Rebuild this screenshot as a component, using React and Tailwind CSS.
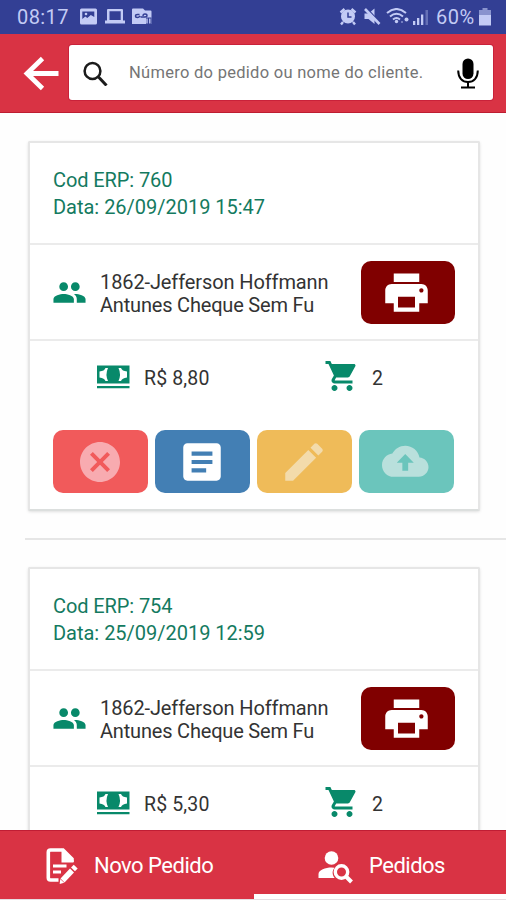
import React from 'react';

function StatusBar() {
  return (
    <div className="flex h-[34px] shrink-0 items-center bg-[#333f94] text-[#c3cbf5]">
      <span className="ml-[17px] w-[53px] text-[20px] leading-none whitespace-nowrap tracking-[0.4px]">08:17</span>
      <svg className="ml-[9px]" width="74" height="18" viewBox="79 9 74 18" fill="currentColor">
        <path fillRule="evenodd" d="M81.500 9.500h14q1.500 0 1.500 1.500v13q0 1.500-1.500 1.500h-14q-1.500 0-1.500-1.500V11q0-1.500 1.500-1.500zM82.300 12.500V20l3-2.500 2 1.500 3.500-3 3.500 2v-5.500z" />
        <circle cx="86" cy="15" r="1.300" />
        <path fillRule="evenodd" d="M108 10h14q1 0 1 1v10.500h2V24.500h-20v-3h2V11q0-1 1-1zM109.500 12.300v8.700h11.200v-8.700z" />
        <path d="M133 9.500h10l2 2h5.500q1 0 1 1v12.500h-19.500V10.500q0-1 1-1z" />
        <path d="M146 18.500h5.500v6.500H146z" fill="#333f94" />
        <path d="M147 19.500v5M149.800 19.500v5" fill="none" stroke="currentColor" strokeWidth="1.400" />
        <path d="M139.500 15.500h-2q-2 0-2 1.500t2 1.500q1.500 0 2.500-1.500M143 17q0-2 2-2t2 1.500-2 1.500h-4.500" fill="none" stroke="#333f94" strokeWidth="1.400" />
      </svg>
      <svg className="ml-[186px]" width="92" height="18" viewBox="339 9 92 18" fill="currentColor">
        <circle cx="348" cy="17.500" r="7" />
        <path d="M340.500 13.500l4-3.500M355.500 13.500l-4-3.500M343 23l-2 2.500M353 23l2 2.500" stroke="currentColor" strokeWidth="2.400" />
        <path d="M348 13.500v4.500h3.500" stroke="#333f94" strokeWidth="1.500" fill="none" />
        <path d="M364.500 14.500h4l6-5v15.500l-6-5h-4z" />
        <path d="M366.500 9l13 14" stroke="#333f94" strokeWidth="1.500" />
        <path d="M365 10l14.500 15" stroke="currentColor" strokeWidth="2.600" />
        <g fill="none" stroke="currentColor" strokeWidth="2">
          <path d="M387 14q9.500-8 19 0" />
          <path d="M390 17.500q6.500-5.500 13 0" />
          <path d="M393 20.500q3.500-3 7 0" />
        </g>
        <circle cx="396.500" cy="22.500" r="1.700" />
        <circle cx="406.500" cy="20.500" r="2" />
        <circle cx="402" cy="23" r="1" opacity=".6" />
        <path d="M413 22h2.300v4H413zM417 19h2.300v7H417zM421 15.500h2.300V26H421z" />
        <path d="M425.500 11h2.500v15h-2.500z" opacity=".35" />
      </svg>
      <span className="ml-[5px] w-[39px] text-[20px] leading-none whitespace-nowrap tracking-[0.5px]">60%</span>
      <svg className="ml-[4px]" width="12" height="18" viewBox="0 0 12 18" fill="currentColor">
        <path d="M3.500 0h5v2H12v6H0V2h3.500z" opacity=".6" />
        <path d="M0 7h12v10.500H0z" />
      </svg>
    </div>
  );
}

function Toolbar() {
  return (
    <div className="flex h-[79px] shrink-0 border-b border-[#bd1d31] bg-[#d93344]">
      <svg className="mt-[22px] ml-[22px] shrink-0" width="38" height="36" viewBox="22 56 38 36" fill="none" stroke="#fff" strokeWidth="4.800">
        <path d="M58.500 73.500H27M42.500 58.500L27 73.500 42.500 88.500" />
      </svg>
      <div className="mt-[11px] ml-[9px] flex h-[55px] w-[424px] items-center rounded-[3px] bg-white shadow-[0_0_0_1px_#c9223a]">
        <svg className="ml-[13px] shrink-0" width="26" height="26" viewBox="82 60 26 26" fill="none" stroke="#1b1b1b">
          <circle cx="92.500" cy="71" r="7.900" strokeWidth="2.500" />
          <path d="M98.500 77l8 8.500" strokeWidth="3" />
        </svg>
        <span className="mt-[2px] ml-[21px] w-[295px] text-[16.500px] leading-none tracking-[0.280px] whitespace-nowrap text-[#757575]">
          Número do pedido ou nome do cliente.
        </span>
        <svg className="ml-[32px] shrink-0" width="24" height="32" viewBox="456 57 24 32" fill="none" stroke="#000">
          <rect x="462.500" y="58.500" width="11" height="20.500" rx="5.500" fill="#000" stroke="none" />
          <path d="M458.200 70.500c0 7.500 4.200 11.500 9.800 11.500s9.800-4 9.800-11.500" strokeWidth="2" />
          <path d="M468 82v5M461 87.500h14" strokeWidth="2" />
        </svg>
      </div>
    </div>
  );
}

const MD = {
  people:
    'M16 11c1.660 0 2.990-1.340 2.990-3S17.660 5 16 5s-3 1.340-3 3 1.340 3 3 3zm-8 0c1.660 0 2.990-1.340 2.990-3S9.660 5 8 5 5 6.340 5 8s1.340 3 3 3zm0 2c-2.330 0-7 1.170-7 3.500V19h14v-2.500c0-2.330-4.670-3.500-7-3.500zm8 0c-.29 0-.62.02-.97.05 1.160.84 1.970 1.970 1.970 3.450V19h6v-2.500c0-2.330-4.670-3.500-7-3.500z',
  print:
    'M19 8H5c-1.660 0-3 1.340-3 3v6h4v4h12v-4h4v-6c0-1.660-1.340-3-3-3zm-3 11H8v-5h8v5zm3-7c-.55 0-1-.45-1-1s.45-1 1-1 1 .45 1 1-.45 1-1 1zm-1-9H6v4h12V3z',
  cart:
    'M7 18c-1.100 0-1.990.9-1.990 2S5.900 22 7 22s2-.9 2-2-.9-2-2-2zM1 2v2h2l3.600 7.590-1.350 2.450c-.16.28-.25.61-.25.96 0 1.100.9 2 2 2h12v-2H7.420c-.14 0-.25-.11-.25-.25l.03-.12.9-1.630h7.450c.75 0 1.410-.41 1.750-1.030l3.580-6.490c.08-.14.12-.31.12-.48 0-.55-.45-1-1-1H5.210l-.94-2H1zm16 16c-1.100 0-1.990.9-1.990 2s.89 2 1.990 2 2-.9 2-2-.9-2-2-2z',
  cancel:
    'M12 2C6.470 2 2 6.470 2 12s4.470 10 10 10 10-4.470 10-10S17.530 2 12 2zm5 13.590L15.590 17 12 13.410 8.410 17 7 15.590 10.590 12 7 8.410 8.410 7 12 10.590 15.590 7 17 8.410 13.410 12 17 15.590z',
  article:
    'M19 3H5c-1.100 0-2 .9-2 2v14c0 1.100.9 2 2 2h14c1.100 0 2-.9 2-2V5c0-1.100-.9-2-2-2zm-5 14H7v-2h7v2zm3-4H7v-2h10v2zm0-4H7V7h10v2z',
  edit:
    'M3 17.250V21h3.750L17.810 9.940l-3.750-3.750L3 17.250zM20.710 7.040c.39-.39.39-1.020 0-1.410l-2.340-2.340c-.39-.39-1.020-.39-1.410 0l-1.830 1.830 3.750 3.750 1.830-1.830z',
  upload:
    'M19.350 10.040C18.670 6.590 15.640 4 12 4 9.110 4 6.600 5.640 5.350 8.040 2.340 8.360 0 10.910 0 14c0 3.310 2.690 6 6 6h13c2.760 0 5-2.240 5-5 0-2.640-2.050-4.780-4.650-4.960zM13.500 12.800v4.100h-3v-4.100H7.600L12 8.300l4.400 4.500h-2.900z',
};

function Icon({ d, size, className = '' }) {
  return (
    <svg className={'shrink-0 ' + className} width={size} height={size} viewBox="0 0 24 24" fill="currentColor">
      <path fillRule="evenodd" d={d} />
    </svg>
  );
}

function ActionButton({ d, size, className }) {
  return (
    <div className={'flex h-[63px] w-[95px] items-center justify-center rounded-[10px] ' + className}>
      <Icon d={d} size={size} className="-ml-[2px]" />
    </div>
  );
}

function OrderCard({ code, date, total, count }) {
  return (
    <div className="ml-[28px] h-[370px] w-[452px] shrink-0 rounded-[2px] border-2 border-[#e6e6e6] border-b-[#dcdfde] bg-white shadow-[0_1px_3px_rgba(0,0,0,0.12)]">
      <div className="h-[102px] border-b-2 border-[#ebebeb] pt-[24px] pl-[23px] text-[20px] leading-[26.500px] whitespace-nowrap text-[#147a60]">
        <div className="tracking-[-0.100px]">Cod ERP: {code}</div>
        <div className="tracking-[-0.020px]">Data: {date}</div>
      </div>
      <div className="flex h-[96px] border-b-2 border-[#ebebeb]">
        <Icon d={MD.people} size={35} className="mt-[30px] ml-[21.5px] text-[#08896a]" />
        <div className="mt-[26px] ml-[13.5px] w-[261px] text-[20px] leading-[23px] whitespace-nowrap text-[#333]">
          <div className="tracking-[-0.110px]">1862-Jefferson Hoffmann</div>
          <div className="tracking-[-0.190px]">Antunes Cheque Sem Fu</div>
        </div>
        <div className="mt-[16px] flex h-[63px] w-[94px] items-center justify-center rounded-[10px] bg-[#800000] text-white">
          <Icon d={MD.print} size={51} className="-ml-[3px]" />
        </div>
      </div>
      <div className="flex h-[89px] pt-[17px] text-[20px] leading-[41px] text-[#333]">
        <svg className="mt-[7px] ml-[67px] shrink-0" width="33" height="24" viewBox="0 0 33 24">
          <path d="M0 .5h32.500v18H0zM0 21h32.500v2.300H0z" fill="#08896a" />
          <path d="M11 3Q8 9.500 11 16H8.500Q7.500 13 2.500 12.500V6.500Q7.500 6 8.500 3zM21.500 3Q24.500 9.500 21.500 16H24Q25 13 30 12.500V6.500Q25 6 24 3z" fill="#fff" />
        </svg>
        <span className="ml-[14px] w-[180px] text-[19.500px] tracking-[0.150px]">R$ {total}</span>
        <Icon d={MD.cart} size={36} className="text-[#08896a]" />
        <span className="ml-[12px] text-[19.500px]">{count}</span>
      </div>
      <div className="flex gap-[7px] pl-[23px]">
        <ActionButton d={MD.cancel} size={48} className="bg-[#f15a5b] text-[#f8abb0]" />
        <ActionButton d={MD.article} size={50} className="bg-[#437fb4] text-white" />
        <ActionButton d={MD.edit} size={50} className="bg-[#efbb59] text-[#f3dbab]" />
        <ActionButton d={MD.upload} size={46.5} className="bg-[#6bc5bc] text-[#b9e0dc]" />
      </div>
    </div>
  );
}

function BottomNav() {
  return (
    <div className="flex h-[70px] shrink-0 border-t border-b border-t-[#c01d34] border-b-[#e5dfe2] bg-[#d93344] text-[22px] leading-[70px] tracking-[-0.500px] text-white">
      <div className="flex w-[253px]">
        <svg className="mt-[16px] ml-[45px] shrink-0" width="34" height="38" viewBox="45 847 34 38" fill="none" stroke="#fff" strokeWidth="3.600">
          <path d="M58.500 880h-8q-2.200 0-2.200-2.200v-25.600q0-2.200 2.200-2.200H63l9 9v3" />
          <path d="M61.500 848.500l12 12v2h-12z" fill="#fff" stroke="none" />
          <path d="M53 866h13.500M53 872h8" strokeWidth="3" />
          <path d="M62.500 880.500l9.500-10" strokeWidth="5.500" />
          <path d="M73 869.400l2.700-2.800" strokeWidth="5.500" />
          <path d="M59.700 884l.5-5 4 3.800z" fill="#fff" stroke="none" />
        </svg>
        <span className="ml-[15px] whitespace-nowrap">Novo Pedido</span>
      </div>
      <div className="flex flex-1 flex-col">
        <div className="flex h-[63px]">
          <svg className="mt-[19px] ml-[65px] shrink-0" width="35" height="34" viewBox="318 850 35 34" fill="#fff">
            <circle cx="331.500" cy="858" r="6.800" />
            <path d="M318.500 878v-4c0-4 7-6.500 13-6.500q1.500 0 3 .3c-2.500 3-2.500 7 .2 10.200z" />
            <circle cx="341.500" cy="872" r="6.200" fill="none" stroke="#fff" strokeWidth="3.400" />
            <path d="M345.500 876l6 6" stroke="#fff" strokeWidth="4" />
          </svg>
          <span className="ml-[16px] whitespace-nowrap">Pedidos</span>
        </div>
        <div className="ml-[1px] h-[5px] bg-white" />
      </div>
    </div>
  );
}

export default function App() {
  return (
    <div className="flex h-[900px] w-[506px] flex-col overflow-hidden bg-[#fefefe] font-['Roboto',sans-serif]">
      <StatusBar />
      <Toolbar />
      <div className="flex h-[717px] flex-col overflow-hidden pt-[28px]">
        <OrderCard code="760" date="26/09/2019 15:47" total="8,80" count="2" />
        <div className="mt-[27px] mb-[27px] ml-[25px] h-[2px] shrink-0 bg-[#e6e6e6]" />
        <OrderCard code="754" date="25/09/2019 12:59" total="5,30" count="2" />
      </div>
      <BottomNav />
    </div>
  );
}
